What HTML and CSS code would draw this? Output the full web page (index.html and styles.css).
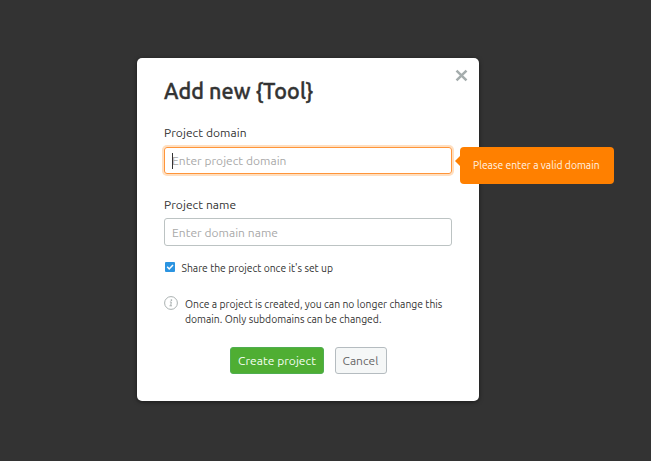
FILE: index.html
```
<!DOCTYPE html>
<html lang="en">
<head>
<meta charset="utf-8">
<title>Add new {Tool}</title>
<link rel="stylesheet" href="styles.css">
</head>
<body>
<main class="dialog" role="dialog" aria-labelledby="title">
  <button class="close" type="button" aria-label="Close">
    <svg viewBox="0 0 12 12"><path d="M1.4 1.4 10.6 10.6M10.6 1.4 1.4 10.6"/></svg>
  </button>
  <h1 class="title" id="title">Add new {Tool}</h1>
  <section class="field">
    <div class="label">Project domain</div>
    <div class="input input-invalid"><i class="caret"></i><span>Enter project domain</span>
      <div class="tooltip">Please enter a valid domain</div>
    </div>
  </section>
  <section class="field">
    <div class="label">Project name</div>
    <div class="input"><span>Enter domain name</span></div>
  </section>
  <div class="share">
    <svg class="check" viewBox="0 0 10 10"><rect width="10" height="10" rx="1"/><path d="M2.2 4.8 4.2 6.9 8 3"/></svg>
    <span>Share the project once it's set up</span>
  </div>
  <div class="note">
    <svg class="info" viewBox="0 0 14 14"><circle cx="7" cy="7" r="6.4"/><path d="M5.9 6H7.3L6.7 9.8H8M5.5 9.8H6.7"/><circle class="dot" cx="7.4" cy="4.1" r=".85"/></svg>
    <p>Once a project is created, you can no longer change this<br>domain. Only subdomains can be changed.</p>
  </div>
  <div class="actions">
    <button class="btn btn-primary" type="button">Create project</button>
    <button class="btn btn-cancel" type="button">Cancel</button>
  </div>
</main>
</body>
</html>
```
FILE: styles.css
```
* { box-sizing: border-box; }
body {
  margin: 0;
  height: 461px;
  padding: 58px 0 0 137px;
  overflow: hidden;
  background: #333;
  color: #333;
  font-family: Ubuntu, "Noto Sans", sans-serif;
  white-space: nowrap;
}
.dialog {
  position: relative;
  width: 342px;
  height: 343px;
  padding: 16px 27px 0;
  background: #fff;
  border-radius: 5px;
  box-shadow: 0 1px 4px rgba(0, 0, 0, .5);
}
.close {
  position: absolute;
  top: 10.5px;
  right: 11px;
  width: 13px;
  height: 13px;
  padding: 0;
  border: 0;
  background: none;
}
.close svg { display: block; width: 13px; height: 13px; }
.close path { fill: none; stroke: #a5adad; stroke-width: 2.3; }
.title {
  margin: 0 0 17px;
  font-size: 21.5px;
  line-height: 34px;
  font-weight: 500;
  letter-spacing: .08px;
  -webkit-text-stroke: .4px #333;
}
.field { margin-bottom: 22px; }
.label { height: 22px; font-size: 12px; line-height: 16px; letter-spacing: .07px; }
.field + .field { margin-top: 23px; }
.field + .field .label { height: 21px; }
.input {
  position: relative;
  width: 288px;
  height: 28px;
  padding: 0 7px;
  border: 1px solid #bcc3c3;
  border-radius: 3px;
  font-size: 12px;
  line-height: 27px;
  letter-spacing: .04px;
  color: #a9a9a9;
}
.input-invalid { height: 27px; line-height: 26px; border-color: #ff953a; box-shadow: 0 0 0 2px #ffdfc0; }
.caret { position: absolute; left: 7px; top: 5px; width: 1px; height: 16px; background: #333; }
.tooltip {
  position: absolute;
  left: 295px;
  top: -1px;
  width: 154px;
  height: 37px;
  padding-left: 13px;
  border-radius: 4px;
  background: #ff8000;
  color: #fff3e6;
  font-size: 10.35px;
  letter-spacing: 0;
  line-height: 36px;
}
.tooltip::before {
  content: "";
  position: absolute;
  left: -5px;
  top: 9px;
  border: 5px solid transparent;
  border-left: 0;
  border-right-color: #ff8000;
}
.share { display: flex; align-items: center; gap: 7px; height: 16px; margin-top: -8px; font-size: 10.35px; }
.check { width: 10px; height: 10px; margin: -2px 0 0 .5px; }
.check rect { fill: #2b94e1; }
.check path { fill: none; stroke: #fff; stroke-width: 1.5; }
.note { display: flex; gap: 7px; margin-top: 20px; font-size: 10.35px; line-height: 15px; }
.note p { margin: 1px 0 0; }
.info { width: 14px; height: 14px; fill: none; stroke: #a5adad; stroke-width: .95; }
.info .dot { fill: #a5adad; stroke: none; }
.actions { display: flex; gap: 10.5px; margin: 19.6px 0 0 66px; }
.btn {
  height: 27.5px;
  padding: 0;
  border: 1px solid;
  border-radius: 3px;
  font: 12px/26px Ubuntu, "Noto Sans", sans-serif;
  letter-spacing: .05px;
}
.btn-primary { width: 94px; background: #4fae33; border-color: #4fae50; color: #f5fff2; }
.btn-cancel { width: 52px; background: #f5f7f7; border-color: #b5bcc0; color: #666; }
```
